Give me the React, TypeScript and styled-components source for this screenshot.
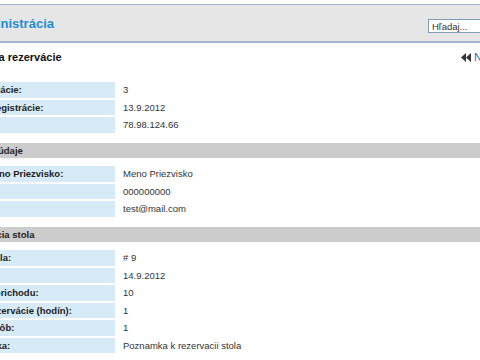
import React from 'react';
import styled, { createGlobalStyle } from 'styled-components';

const GlobalStyle = createGlobalStyle`
  html, body {
    margin: 0;
    padding: 0;
    background: #ffffff;
    overflow: hidden;
    font-family: "Liberation Sans", Arial, sans-serif;
  }
`;

const Page = styled.div`
  width: 566px;
  margin-left: -42px;
`;

const Header = styled.header`
  margin-top: 4px;
  height: 36px;
  background: #e6e6e6;
  border-top: 1px solid #a2b7ce;
  border-bottom: 2px solid #a2b7ce;
  display: flex;
  align-items: center;
  justify-content: space-between;
  padding: 0 10px;
`;

const Logo = styled.h1`
  margin: 0;
  font-size: 13px;
  font-weight: 700;
  color: #1e8ed4;
`;

const Search = styled.input`
  width: 86px;
  height: 14px;
  margin-top: 6px;
  border: 1px solid #7f9db9;
  background: #fff;
  padding: 0 3px;
  font-family: inherit;
  font-size: 9.5px;
  color: #333;
  box-sizing: border-box;
  &::placeholder {
    color: #333;
  }
`;

const TitleBar = styled.div`
  margin-top: 7px;
  height: 14px;
  display: flex;
  align-items: center;
  justify-content: space-between;
  padding: 0 14px 0 10px;
`;

const Title = styled.h2`
  margin: 0;
  font-size: 11px;
  font-weight: 700;
  color: #111;
`;

const BackLink = styled.a`
  display: flex;
  align-items: center;
  gap: 3px;
  font-size: 11px;
  color: #2a6eb5;
  text-decoration: none;
`;

const Table = styled.div<{ $top: number }>`
  margin-top: ${(p) => p.$top}px;
  display: grid;
  grid-template-columns: 157px 1fr;
  column-gap: 6px;
  row-gap: 2px;
`;

const Label = styled.div`
  height: 15.5px;
  background: #d6eaf8;
  padding-left: 2px;
  display: flex;
  align-items: center;
  font-size: 9.5px;
  font-weight: 700;
  color: #222;
  white-space: nowrap;
  overflow: hidden;
`;

const Value = styled.div`
  height: 15.5px;
  padding-left: 2px;
  display: flex;
  align-items: center;
  font-size: 9.5px;
  color: #333;
  white-space: nowrap;
`;

const Section = styled.div`
  margin-top: 10.5px;
  height: 15px;
  background: #cccccc;
  padding-left: 2px;
  display: flex;
  align-items: center;
  font-size: 9.5px;
  font-weight: 700;
  color: #222;
`;

const BackIcon = () => (
  <svg width="10" height="9" viewBox="0 0 10 9">
    <polygon points="5,0 0,4.5 5,9" fill="#333" />
    <polygon points="10,0 5,4.5 10,9" fill="#333" />
  </svg>
);

type Row = [string, string];

const basic: Row[] = [
  ['ID rezervácie:', '3'],
  ['Dátum registrácie:', '13.9.2012'],
  ['IP:', '78.98.124.66'],
];

const personal: Row[] = [
  ['Titul, meno Priezvisko:', 'Meno Priezvisko'],
  ['Telefón:', '000000000'],
  ['Email:', 'test@mail.com'],
];

const booking: Row[] = [
  ['Číslo stola:', '# 9'],
  ['Dátum:', '14.9.2012'],
  ['Hodina prichodu:', '10'],
  ['Dĺžka rezervácie (hodín):', '1'],
  ['Počet osôb:', '1'],
  ['Poznámka:', 'Poznamka k rezervacii stola'],
];

const Rows = ({ rows, top }: { rows: Row[]; top: number }) => (
  <Table $top={top}>
    {rows.map(([label, value]) => (
      <React.Fragment key={label}>
        <Label>{label}</Label>
        <Value>{value}</Value>
      </React.Fragment>
    ))}
  </Table>
);

const App = () => {
  return (
    <>
      <GlobalStyle />
      <Page>
        <Header>
          <Logo>Administrácia</Logo>
          <Search placeholder="Hľadaj..." />
        </Header>
        <TitleBar>
          <Title>Správa rezervácie</Title>
          <BackLink href="#">
            <BackIcon />
            Naspäť
          </BackLink>
        </TitleBar>
        <Rows rows={basic} top={18} />
        <Section>Osobné údaje</Section>
        <Rows rows={personal} top={8} />
        <Section>Rezervácia stola</Section>
        <Rows rows={booking} top={8} />
      </Page>
    </>
  );
};

export default App;
